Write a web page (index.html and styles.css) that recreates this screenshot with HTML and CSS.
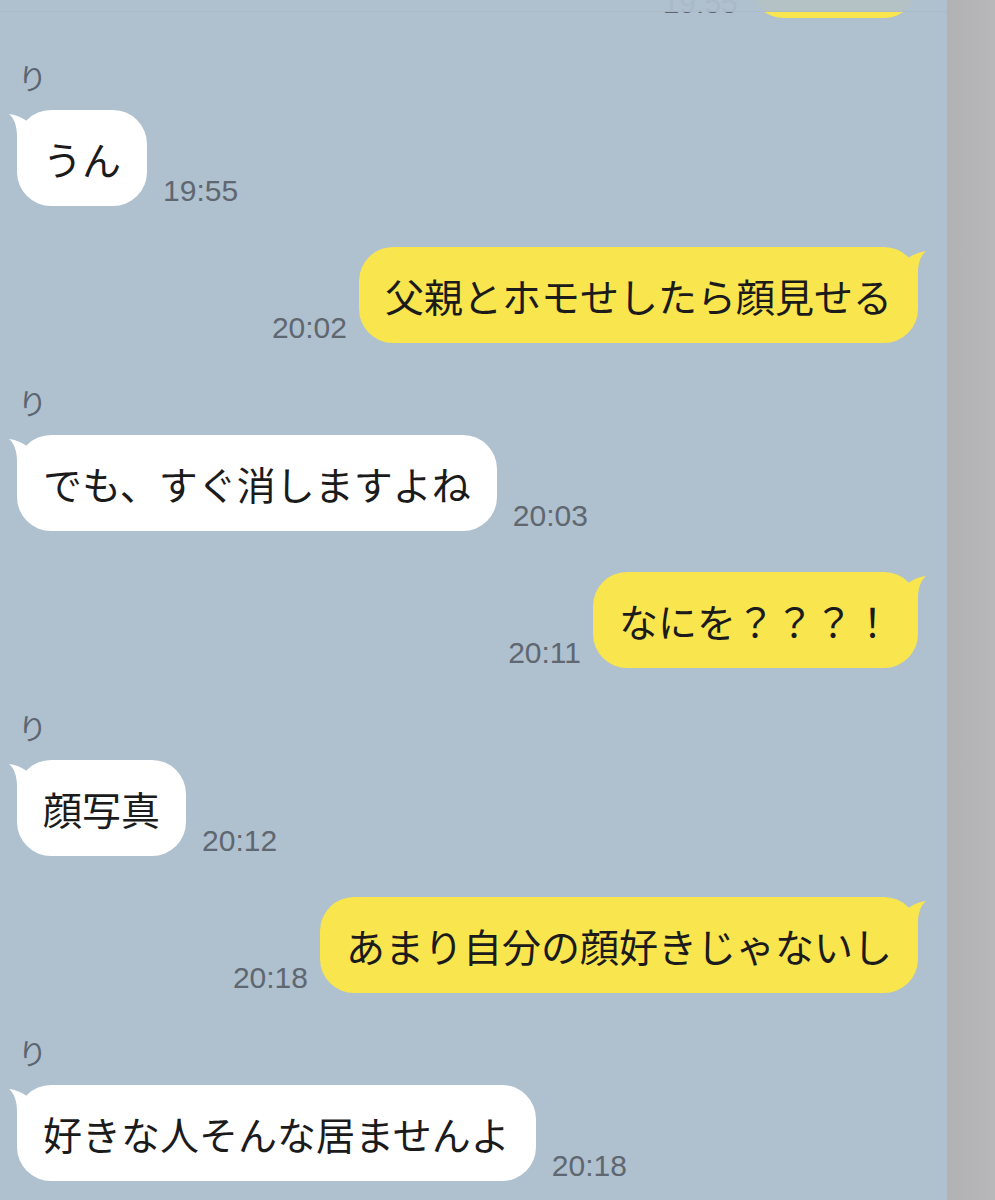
FILE: index.html
```html
<!DOCTYPE html>
<html lang="ja">
<head>
<meta charset="utf-8">
<title>LINE</title>
<link rel="stylesheet" href="styles.css">
</head>
<body>
<div class="screen">
  <main class="chat">
    <div class="top-shade"></div>

    <div class="row row-me row-first">
      <span class="time">19:55</span>
      <div class="bubble bubble-me">いいよ<svg class="tail tail-me" viewBox="0 0 30 40"><path d="M1 4 Q10 5 19 11 L19 40 L9 40 L9 26 C9 16 6 8 1 4 Z"/></svg></div>
    </div>

    <div class="row row-them">
      <div class="name">り</div>
      <div class="line">
        <div class="bubble bubble-them">うん<svg class="tail tail-them" viewBox="0 0 30 40"><path d="M1 4 Q10 5 19 11 L19 40 L9 40 L9 26 C9 16 6 8 1 4 Z"/></svg></div>
        <span class="time">19:55</span>
      </div>
    </div>

    <div class="row row-me">
      <span class="time">20:02</span>
      <div class="bubble bubble-me">父親とホモせしたら顔見せる<svg class="tail tail-me" viewBox="0 0 30 40"><path d="M1 4 Q10 5 19 11 L19 40 L9 40 L9 26 C9 16 6 8 1 4 Z"/></svg></div>
    </div>

    <div class="row row-them">
      <div class="name">り</div>
      <div class="line">
        <div class="bubble bubble-them">でも、すぐ消しますよね<svg class="tail tail-them" viewBox="0 0 30 40"><path d="M1 4 Q10 5 19 11 L19 40 L9 40 L9 26 C9 16 6 8 1 4 Z"/></svg></div>
        <span class="time">20:03</span>
      </div>
    </div>

    <div class="row row-me">
      <span class="time">20:11</span>
      <div class="bubble bubble-me">なにを？？？！<svg class="tail tail-me" viewBox="0 0 30 40"><path d="M1 4 Q10 5 19 11 L19 40 L9 40 L9 26 C9 16 6 8 1 4 Z"/></svg></div>
    </div>

    <div class="row row-them">
      <div class="name">り</div>
      <div class="line">
        <div class="bubble bubble-them">顔写真<svg class="tail tail-them" viewBox="0 0 30 40"><path d="M1 4 Q10 5 19 11 L19 40 L9 40 L9 26 C9 16 6 8 1 4 Z"/></svg></div>
        <span class="time">20:12</span>
      </div>
    </div>

    <div class="row row-me">
      <span class="time">20:18</span>
      <div class="bubble bubble-me">あまり自分の顔好きじゃないし<svg class="tail tail-me" viewBox="0 0 30 40"><path d="M1 4 Q10 5 19 11 L19 40 L9 40 L9 26 C9 16 6 8 1 4 Z"/></svg></div>
    </div>

    <div class="row row-them">
      <div class="name">り</div>
      <div class="line">
        <div class="bubble bubble-them">好きな人そんな居ませんよ<svg class="tail tail-them" viewBox="0 0 30 40"><path d="M1 4 Q10 5 19 11 L19 40 L9 40 L9 26 C9 16 6 8 1 4 Z"/></svg></div>
        <span class="time">20:18</span>
      </div>
    </div>
  </main>
  <aside class="strip"></aside>
</div>
</body>
</html>
```

FILE: styles.css
```css
* {
  box-sizing: border-box;
}

html, body {
  margin: 0;
  padding: 0;
  background: #afc0cf;
}

body {
  font-family: "Noto Sans CJK JP", "Noto Sans", sans-serif;
}

.screen {
  display: flex;
  width: 995px;
  height: 1200px;
  overflow: hidden;
}

.chat {
  position: relative;
  flex: 0 0 947px;
  display: flex;
  flex-direction: column;
  gap: 41px;
  padding: 0 29px 0 17px;
  background: #afc0cf;
  overflow: hidden;
}

.top-shade {
  position: absolute;
  top: 0;
  left: 0;
  right: 0;
  height: 12px;
  background: rgba(175, 192, 207, 0.93);
  border-bottom: 1px solid rgba(150, 165, 178, 0.18);
  z-index: 2;
}

.row-first {
  margin-top: -78px;
}

.row-me {
  display: flex;
  justify-content: flex-end;
  align-items: flex-end;
  gap: 12px;
}

.row-them {
  display: flex;
  flex-direction: column;
  align-items: flex-start;
}

.name {
  height: 36px;
  line-height: 36px;
  font-size: 29px;
  color: #5c6570;
  margin-bottom: 15px;
  padding-left: 1px;
}

.line {
  display: flex;
  align-items: flex-end;
  gap: 16px;
}

.bubble {
  position: relative;
  padding: 24px 26px;
  font-size: 39px;
  line-height: 48px;
  color: #1b1b1b;
  border-radius: 34px;
  white-space: nowrap;
}

.bubble-them {
  background: #ffffff;
}

.bubble-me {
  background: #f9e54e;
}

.tail {
  position: absolute;
  top: 0;
  width: 30px;
  height: 40px;
}

.tail-them {
  left: -9px;
  fill: #ffffff;
}

.tail-me {
  right: -9px;
  fill: #f9e54e;
  transform: scaleX(-1);
}

.time {
  font-family: "Liberation Sans", Arial, sans-serif;
  font-size: 30px;
  line-height: 30px;
  color: #5f6770;
}

.strip {
  flex: 1 1 auto;
  background: linear-gradient(90deg, #b2b2b4 0%, #b5b4b7 60%, #b8b8ba 100%);
}
```
